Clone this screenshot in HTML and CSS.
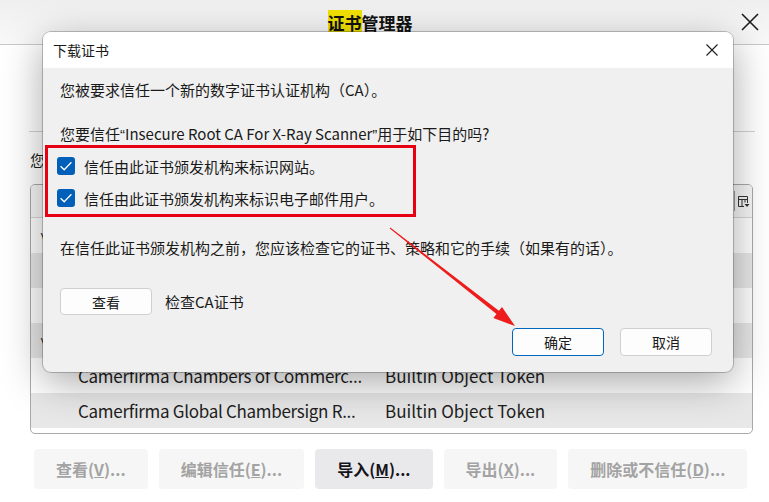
FILE: index.html
```html
<!DOCTYPE html>
<html>
    <head>
        <meta charset="utf-8">
        <link rel="stylesheet" href="styles.css">
    </head>
    <body>
        <div class="window">
            <div class="titlebar">
                <span class="title"><mark>证书</mark>管理器</span>
                <svg class="win-close" width="20" height="20" viewBox="0 0 20 20">
                    <path d="M2 2 L18 18 M18 2 L2 18" stroke="#1c1c1c" stroke-width="1.6" fill="none"/>
                </svg>
            </div>
            <div class="tabs"></div>
            <div class="content">
                <p class="intro">您有用于识别这些证书颁发机构的证书：</p>
                <div class="tree">
                    <div class="tree-head">
                        <span class="col-name">证书名称</span>
                        <span class="col-dev">安全设备</span>
                        <span class="col-pick">
                            <svg width="13" height="13" viewBox="0 0 13 13">
                                <path d="M1.5 1.5 H10.5 V8 M1.5 1.5 V11.5 H7 M1.5 4.5 H10.5 M5 4.5 V11.5 M8 4.5 V7.5" stroke="#333" stroke-width="1" fill="none"/>
                                <path d="M7.5 9 H12.5 L10 12 Z" fill="#333"/>
                            </svg>
                        </span>
                    </div>
                    <div class="row"><span class="twisty">˅</span><span class="cell-name">AC Camerfirma S.A.</span><span class="cell-dev"></span></div>
                    <div class="row odd"><span class="twisty"></span><span class="cell-name">AC RAIZ FNMT-RCM</span><span class="cell-dev">Builtin Object Token</span></div>
                    <div class="row"><span class="twisty"></span><span class="cell-name">AC RAIZ FNMT-RCM SERVIDORES...</span><span class="cell-dev">Builtin Object Token</span></div>
                    <div class="row odd"><span class="twisty">˅</span><span class="cell-name">AC Camerfirma SA CIF A82743287</span><span class="cell-dev"></span></div>
                    <div class="row"><span class="twisty"></span><span class="cell-name">Camerfirma Chambers of Commerc...</span><span class="cell-dev">Builtin Object Token</span></div>
                    <div class="row odd"><span class="twisty"></span><span class="cell-name">Camerfirma Global Chambersign R...</span><span class="cell-dev">Builtin Object Token</span></div>
                </div>
                <div class="actions">
                    <button class="act" disabled>查看(<u>V</u>)...</button>
                    <button class="act" disabled>编辑信任(<u>E</u>)...</button>
                    <button class="act on">导入(<u>M</u>)...</button>
                    <button class="act" disabled>导出(<u>X</u>)...</button>
                    <button class="act" disabled>删除或不信任(<u>D</u>)...</button>
                </div>
            </div>
        </div>

        <div class="dialog">
            <div class="dialog-title">
                <span>下载证书</span>
                <svg width="12" height="12" viewBox="0 0 12 12">
                    <path d="M0.5 0.5 L11.5 11.5 M11.5 0.5 L0.5 11.5" stroke="#1c1c1c" stroke-width="1.1" fill="none"/>
                </svg>
            </div>
            <div class="dialog-body">
                <p class="line first">您被要求信任一个新的数字证书认证机构（CA）。</p>
                <p class="line ask">您要信任<span class="q">“</span>Insecure Root CA For X-Ray Scanner<span class="q">”</span>用于如下目的吗?</p>
                <div class="purposes">
                    <label class="check">
                        <span class="box"><svg width="18" height="18" viewBox="0 0 18 18"><path d="M3.6 9.2 L7.2 12.8 L14.4 5.2" stroke="#fff" stroke-width="1.3" fill="none"/></svg></span>
                        信任由此证书颁发机构来标识网站。
                    </label>
                    <label class="check">
                        <span class="box"><svg width="18" height="18" viewBox="0 0 18 18"><path d="M3.6 9.2 L7.2 12.8 L14.4 5.2" stroke="#fff" stroke-width="1.3" fill="none"/></svg></span>
                        信任由此证书颁发机构来标识电子邮件用户。
                    </label>
                </div>
                <p class="line note">在信任此证书颁发机构之前，您应该检查它的证书、策略和它的手续（如果有的话）。</p>
                <div class="view-row">
                    <button class="btn">查看</button>
                    <span>检查CA证书</span>
                </div>
                <div class="dialog-foot">
                    <button class="btn primary">确定</button>
                    <button class="btn">取消</button>
                </div>
            </div>
        </div>

        <svg class="arrow" width="769" height="502" viewBox="0 0 769 502">
            <polygon points="390.3,227.6 498.9,310.8 502,306.9 515,326 493.4,317.9 496.5,314 389.7,228.4" fill="#ee1c1c"/>
        </svg>
    </body>
</html>
```

FILE: styles.css
```css
body {
    margin: 0;
    width: 769px;
    height: 502px;
    overflow: hidden;
    background: #fff;
    font-family: "Noto Sans CJK SC", sans-serif;
    color: #1a1a1a;
    position: relative;
}
p {
    margin: 0;
}
button {
    font-family: inherit;
}

/* background window */
.titlebar {
    height: 44px;
    border-bottom: 1px solid #c9c9c9;
    background: linear-gradient(#efefef, #f9f9f9);
    display: flex;
    align-items: center;
}
.title {
    flex: 1;
    text-align: center;
    font-size: 17px;
    font-weight: bold;
    color: #111;
}
.title mark {
    background: #f2e200;
    color: #111;
}
.win-close {
    margin-right: 9px;
}
.tabs {
    height: 86px;
    margin: 0 14px 0 29px;
    border-bottom: 1px solid #d2d2d2;
}
.content {
    padding: 0 16px 0 30px;
}
.intro {
    margin-top: 17px;
    font-size: 15px;
    line-height: 22px;
}
.tree {
    margin-top: 13px;
    height: 250px;
    box-sizing: border-box;
    border: 1px solid #a9a9a9;
    border-radius: 5px;
    overflow: hidden;
}
.tree-head {
    height: 32px;
    border-bottom: 1px solid #d8d8d8;
    background: #f7f7f7;
    display: flex;
    align-items: center;
    font-size: 15px;
}
.col-name {
    width: 355px;
    padding-left: 47px;
}
.col-dev {
    flex: 1;
}
.col-pick {
    width: 15px;
    height: 20px;
    border-left: 1px solid #999;
    display: flex;
    align-items: center;
    justify-content: flex-end;
    padding-right: 2px;
}
.row {
    height: 35px;
    display: flex;
    align-items: center;
    font-size: 17px;
    color: #1e1e1e;
}
.row.odd {
    background: #e8e8e8;
}
.twisty {
    width: 47px;
    padding-left: 9px;
    box-sizing: border-box;
    font-size: 14px;
}
.cell-name {
    width: 307px;
    white-space: nowrap;
    overflow: hidden;
    letter-spacing: -0.3px;
}
.cell-dev {
    flex: 1;
}
.actions {
    margin-top: 15px;
    padding-left: 4px;
    display: flex;
    gap: 11px;
}
.act {
    height: 40px;
    padding: 0 22px;
    border: none;
    border-radius: 4px;
    background: #f6f6f6;
    color: #a3a3a3;
    font-size: 16px;
    font-weight: bold;
}
.act.on {
    background: #e9e9ec;
    color: #15141a;
}

/* download dialog */
.dialog {
    position: absolute;
    left: 43px;
    top: 32px;
    width: 690px;
    height: 340px;
    background: #f0f0f0;
    border-radius: 8px;
    overflow: hidden;
    box-shadow: 0 0 0 1px rgba(0, 0, 0, 0.22), 0 10px 40px rgba(0, 0, 0, 0.35);
}
.dialog-title {
    height: 36px;
    background: #fff;
    display: flex;
    align-items: center;
    justify-content: space-between;
    padding: 0 15px 0 10px;
    font-size: 14px;
}
.dialog-body {
    padding: 0 21px 16px 17px;
    font-size: 15px;
}
.line {
    line-height: 22px;
}
.line.first {
    margin-top: 11px;
}
.line.ask {
    margin-top: 23px;
    line-height: 20px;
}
.q {
    font-family: "Liberation Sans", sans-serif;
}
.purposes {
    width: 371px;
    box-sizing: border-box;
    margin-left: -15px;
    border: 3px solid #e60012;
    padding: 2px 0 0 9px;
    height: 72px;
}
.check {
    height: 32px;
    display: flex;
    align-items: center;
    gap: 9px;
}
.box {
    width: 18px;
    height: 18px;
    border-radius: 3px;
    background: #005fb8;
    display: flex;
}
.line.note {
    margin-top: 20px;
}
.view-row {
    margin-top: 29px;
    display: flex;
    align-items: center;
    gap: 13px;
}
.btn {
    width: 92px;
    height: 27px;
    border: 1px solid #d0d0d0;
    border-radius: 4px;
    background: #fdfdfd;
    font-size: 14px;
    color: #1a1a1a;
}
.dialog-foot {
    margin-top: 13px;
    display: flex;
    justify-content: flex-end;
    gap: 16px;
}
.dialog-foot .btn {
    height: 28px;
}
.btn.primary {
    border-color: #0067c0;
}

.arrow {
    position: absolute;
    left: 0;
    top: 0;
    pointer-events: none;
}
```
